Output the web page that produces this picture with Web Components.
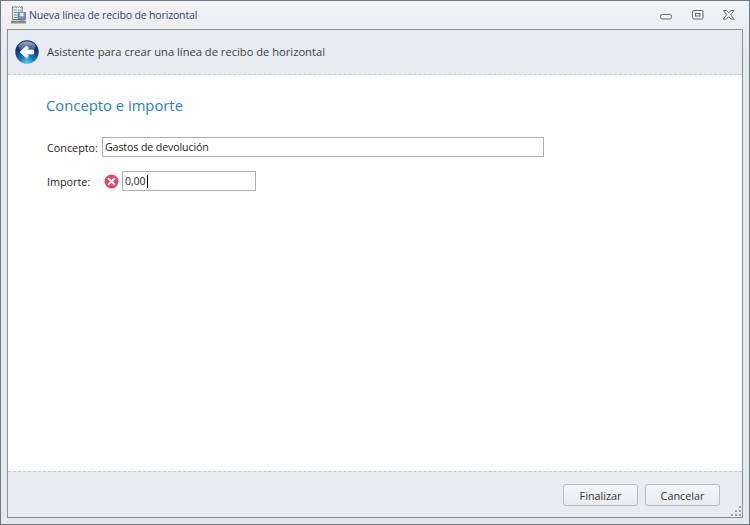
<!DOCTYPE html>
<html>
<head>
<meta charset="utf-8">
<title>Nueva línea de recibo de horizontal</title>
<style>
  html, body { margin: 0; padding: 0; background: #e8ebee; }
  body { font-family: "Open Sans", "Noto Sans", sans-serif; font-size: 11px; }
</style>
</head>
<body>

<wizard-window caption="Nueva línea de recibo de horizontal">
  <wizard-header slot="header">Asistente para crear una línea de recibo de horizontal</wizard-header>

  <h-title>Concepto e importe</h-title>
  <form-row label="Concepto:">
    <text-box value="Gastos de devolución" style="width:442px"></text-box>
  </form-row>
  <form-row label="Importe:" error>
    <text-box value="0,00" caret style="width:134px"></text-box>
  </form-row>

  <wizard-footer slot="footer">
    <push-button>Finalizar</push-button>
    <push-button>Cancelar</push-button>
  </wizard-footer>
</wizard-window>

<script>
class WizardWindow extends HTMLElement {
  connectedCallback() {
    this.attachShadow({ mode: 'open' });
    this.shadowRoot.innerHTML = `
      <style>
        :host {
          display: flex;
          flex-direction: column;
          box-sizing: border-box;
          width: 750px;
          height: 525px;
          border: 1px solid #6d7882;
          background: linear-gradient(#f1f3f5, #e6e9ec 60px);
          padding: 0 6px 6px 6px;
          color: #333;
        }
        .bar {
          display: flex;
          align-items: center;
          height: 28px;
          flex: none;
        }
        .app-icon { margin: 0 3px 0 4px; flex: none; }
        .caption { flex: 1; font-size: 10.6px; letter-spacing: -.19px; color: #34466a; }
        .btns { display: flex; align-items: center; margin-right: 2px; }
        .btns svg { display: block; }
        .frame {
          flex: 1;
          display: flex;
          flex-direction: column;
          min-height: 0;
          border: 1px solid #8a9198;
          background: #fff;
        }
        .content { flex: 1; padding: 19px 38px 0 38px; }
        .grip { position: absolute; right: 1px; bottom: 1px; }
        .frame-wrap { position: relative; flex: 1; display: flex; min-height: 0; }
      </style>
      <div class="bar">
        <svg class="app-icon" width="15" height="18" viewBox="0 0 15 18">
          <path d="M1.5 .5l1.2 1 1.2-1 1.2 1 1.2-1 1.2 1 1.2-1 1.2 1 1.3-1v13h-9.500z" fill="#f2f5f2" stroke="#6c7a78"/>
          <path d="M3 4h3M3 6.500h3M3 9h3M3 11.500h3" stroke="#5d8a8e" stroke-width="1.100"/>
          <rect x="7" y="3.500" width="3" height="2" fill="#9fb4bb"/>
          <rect x="7" y="6.500" width="7.500" height="7" fill="#6f93c2" stroke="#56697c" stroke-width=".7"/>
          <rect x="8.800" y="6.800" width="3.800" height="3.500" fill="#dfe6ee"/>
          <rect x="0" y="14.500" width="15" height="3" fill="#87959a"/>
          <rect x="1" y="15" width="3" height="2" fill="#5d9a5a"/>
          <rect x="8" y="14.500" width="5" height="2.500" fill="#c4705a"/>
        </svg>
        <span class="caption">${this.getAttribute('caption')}</span>
        <div class="btns">
          <svg style="margin:4px 20px 0 0" width="12" height="6" viewBox="0 0 12 6"><rect x=".5" y=".5" width="11" height="4.500" rx="1.800" fill="#f3f5f6" stroke="#5d6973"/></svg>
          <svg style="margin-right:19px" width="12" height="10" viewBox="0 0 12 10"><rect x=".5" y=".5" width="10.500" height="8.500" rx="1.500" fill="#f3f5f6" stroke="#5d6973"/><rect x="3.500" y="3.500" width="4.500" height="2.500" fill="none" stroke="#5d6973"/></svg>
          <svg style="margin-right:6px" width="12" height="10" viewBox="0 0 12 10"><path d="M.5 .5h3L5.700 2.800 8 .5h3L7.800 4.800l3.300 4.400h-3L5.700 6.700 3.300 9.200h-3l3.300-4.400z" fill="#f3f5f6" stroke="#5d6973"/></svg>
        </div>
      </div>
      <div class="frame-wrap">
        <div class="frame" style="flex:1">
          <slot name="header"></slot>
          <div class="content"><slot></slot></div>
          <slot name="footer"></slot>
        </div>
        <svg class="grip" width="12" height="12" viewBox="0 0 12 12" fill="#9aa0a6">
          <rect x="9" y="1" width="2" height="2"/><rect x="5" y="5" width="2" height="2"/><rect x="9" y="5" width="2" height="2"/>
          <rect x="1" y="9" width="2" height="2"/><rect x="5" y="9" width="2" height="2"/><rect x="9" y="9" width="2" height="2"/>
        </svg>
      </div>
    `;
  }
}

class WizardHeader extends HTMLElement {
  connectedCallback() {
    this.attachShadow({ mode: 'open' });
    this.shadowRoot.innerHTML = `
      <style>
        :host {
          display: flex;
          align-items: center;
          box-sizing: border-box;
          height: 45px;
          padding: 0 6px 1px 7px;
          background: #e8ebef;
          border-bottom: 1px dashed #c3c6ca;
          font-size: 11.170px;
          color: #3c3f44;
        }
        svg { flex: none; margin-right: 8px; }
      </style>
      <svg width="24" height="24" viewBox="0 0 24 24">
        <defs>
          <radialGradient id="g" cx="50%" cy="95%" r="75%">
            <stop offset="0" stop-color="#42d8f8"/>
            <stop offset=".4" stop-color="#1478c4"/>
            <stop offset=".8" stop-color="#123f85"/>
            <stop offset="1" stop-color="#102f68"/>
          </radialGradient>
          <linearGradient id="s" x1="0" y1="0" x2="0" y2="1">
            <stop offset="0" stop-color="#fff" stop-opacity=".6"/>
            <stop offset="1" stop-color="#fff" stop-opacity=".05"/>
          </linearGradient>
        </defs>
        <circle cx="12" cy="12" r="11.700" fill="url(#g)"/>
        <ellipse cx="12" cy="6.500" rx="8.500" ry="5" fill="url(#s)"/>
        <path d="M5 12L11.500 6 13.500 8 11.500 10H18.500V14H11.500L13.500 16 11.500 18z" fill="#fff" stroke="#fff" stroke-width=".8" stroke-linejoin="round"/>
      </svg>
      <span><slot></slot></span>
    `;
  }
}

class HTitle extends HTMLElement {
  connectedCallback() {
    this.attachShadow({ mode: 'open' });
    this.shadowRoot.innerHTML = `
      <style>
        :host {
          display: block;
          height: 22px;
          line-height: 22px;
          font-size: 14.800px;
          color: #1b84c6;
          margin-bottom: 21px;
        }
      </style>
      <slot></slot>
    `;
  }
}

class FormRow extends HTMLElement {
  connectedCallback() {
    this.attachShadow({ mode: 'open' });
    const err = this.hasAttribute('error');
    this.shadowRoot.innerHTML = `
      <style>
        :host {
          display: flex;
          align-items: center;
          height: 20px;
          margin-bottom: 14px;
          margin-left: 1px;
          font-size: 10.800px;
          color: #222;
        }
        .label { width: 55px; flex: none; }
        .err { width: 20px; flex: none; display: flex; margin-left: 2px; margin-right: -2px;}
      </style>
      <span class="label">${this.getAttribute('label')}</span>
      ${err ? `<span class="err"><svg width="15" height="15" viewBox="0 0 15 15">
        <circle cx="7.500" cy="7.500" r="7" fill="#e5476a"/>
        <path d="M4.700 4.700l5.600 5.600M10.300 4.700l-5.600 5.600" stroke="#fde8ec" stroke-width="2" stroke-linecap="round"/>
      </svg></span>` : ''}
      <slot></slot>
    `;
  }
}

class TextBox extends HTMLElement {
  connectedCallback() {
    this.attachShadow({ mode: 'open' });
    this.shadowRoot.innerHTML = `
      <style>
        :host {
          display: flex;
          align-items: center;
          box-sizing: border-box;
          height: 20px;
          padding: 0 2px;
          background: #fff;
          border: 1px solid #abafb4;
          font-size: 10.600px;
          letter-spacing: -.1px;
          color: #222;
        }
        i { display: inline-block; width: 1px; height: 13px; margin-left: 1px; background: #000; }
      </style>
      <span>${this.getAttribute('value')}</span>${this.hasAttribute('caret') ? '<i></i>' : ''}
    `;
  }
}

class WizardFooter extends HTMLElement {
  connectedCallback() {
    this.attachShadow({ mode: 'open' });
    this.shadowRoot.innerHTML = `
      <style>
        :host {
          display: flex;
          justify-content: flex-end;
          align-items: flex-start;
          gap: 7px;
          box-sizing: border-box;
          height: 46px;
          padding: 12px 22px 0 0;
          background: #e8ebef;
          border-top: 1px dashed #c3c6ca;
        }
      </style>
      <slot></slot>
    `;
  }
}

class PushButton extends HTMLElement {
  connectedCallback() {
    this.attachShadow({ mode: 'open' });
    this.shadowRoot.innerHTML = `
      <style>
        :host {
          display: flex;
          align-items: center;
          justify-content: center;
          box-sizing: border-box;
          width: 75px;
          height: 22px;
          border: 1px solid #b9bdc2;
          border-radius: 3px;
          background: linear-gradient(#f3f5f7, #e9ecef);
          font-size: 10.800px;
          color: #333;
        }
      </style>
      <slot></slot>
    `;
  }
}

customElements.define('wizard-window', WizardWindow);
customElements.define('wizard-header', WizardHeader);
customElements.define('h-title', HTitle);
customElements.define('form-row', FormRow);
customElements.define('text-box', TextBox);
customElements.define('wizard-footer', WizardFooter);
customElements.define('push-button', PushButton);
</script>
</body>
</html>
